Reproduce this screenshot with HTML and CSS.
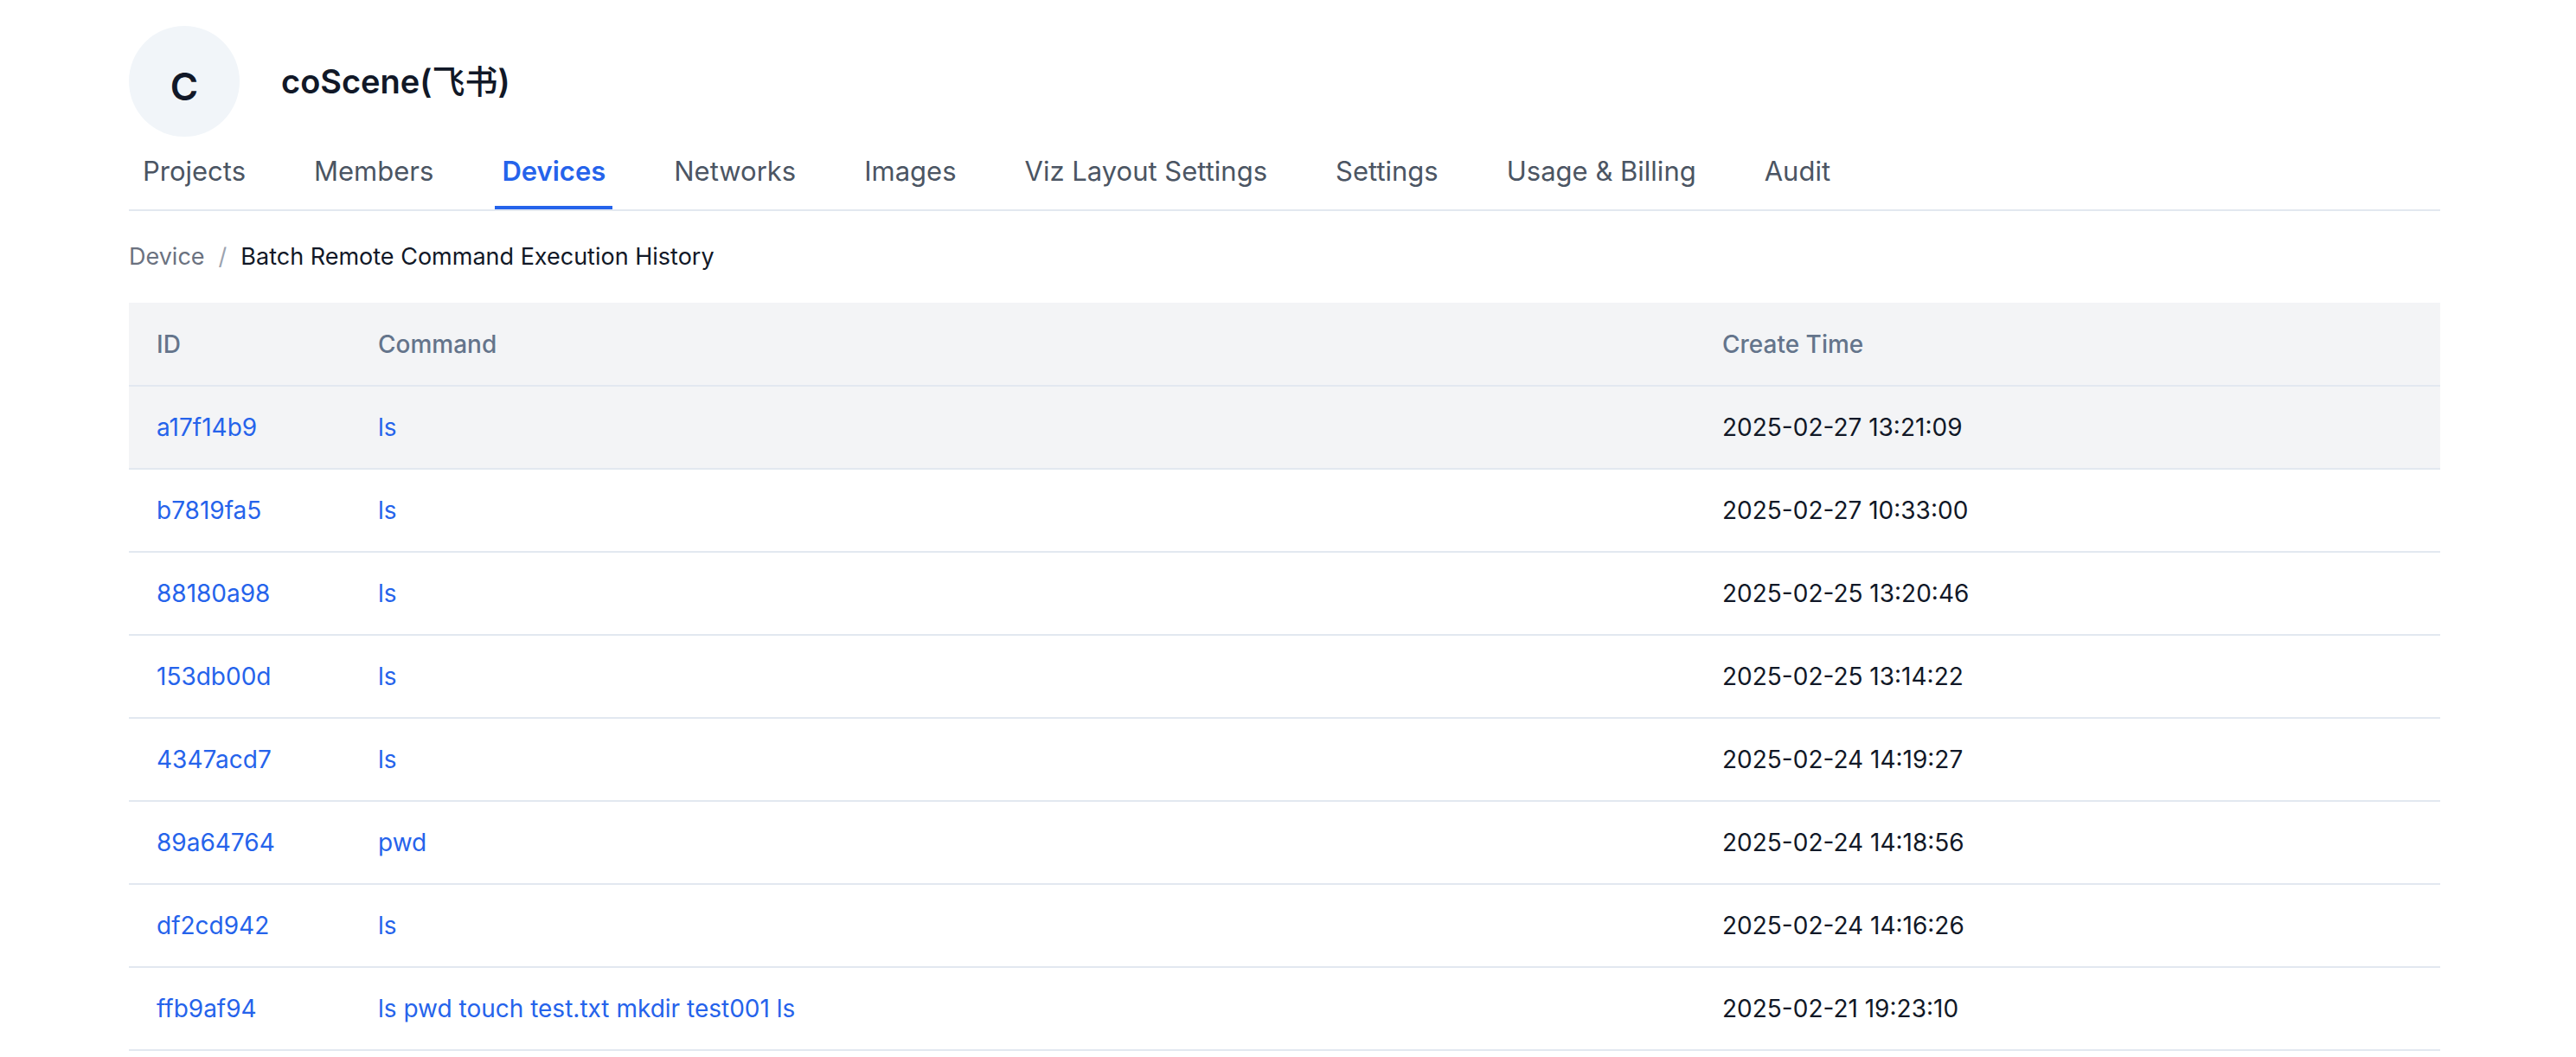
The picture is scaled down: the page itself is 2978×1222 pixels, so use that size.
FILE: index.html
```html
<!DOCTYPE html>
<html lang="en">
<head>
<meta charset="utf-8">
<title>Batch Remote Command Execution History</title>
<link rel="stylesheet" href="styles.css">
</head>
<body>
<div class="page">
<header class="org">
<div class="avatar" aria-hidden="true">C</div>
<h1 class="org-name">coScene(<span class="org-alias" lang="zh">飞书</span>)</h1>
</header>
<nav class="tabs">
<a class="tab" href="#">Projects</a>
<a class="tab" href="#">Members</a>
<a class="tab active" href="#" aria-current="page">Devices</a>
<a class="tab" href="#">Networks</a>
<a class="tab" href="#">Images</a>
<a class="tab" href="#">Viz Layout Settings</a>
<a class="tab" href="#">Settings</a>
<a class="tab" href="#">Usage &amp; Billing</a>
<a class="tab" href="#">Audit</a>
</nav>
<nav class="crumbs">
<a class="crumb" href="#">Device</a>
<span class="slash">/</span>
<span class="current">Batch Remote Command Execution History</span>
</nav>
<table class="history">
<colgroup><col class="col-id"><col class="col-command"><col class="col-time"></colgroup>
<thead><tr><th>ID</th><th>Command</th><th>Create Time</th></tr></thead>
<tbody>
<tr class="hovered"><td><a href="#">a17f14b9</a></td><td><a href="#">ls</a></td><td>2025-02-27 13:21:09</td></tr>
<tr><td><a href="#">b7819fa5</a></td><td><a href="#">ls</a></td><td>2025-02-27 10:33:00</td></tr>
<tr><td><a href="#">88180a98</a></td><td><a href="#">ls</a></td><td>2025-02-25 13:20:46</td></tr>
<tr><td><a href="#">153db00d</a></td><td><a href="#">ls</a></td><td>2025-02-25 13:14:22</td></tr>
<tr><td><a href="#">4347acd7</a></td><td><a href="#">ls</a></td><td>2025-02-24 14:19:27</td></tr>
<tr><td><a href="#">89a64764</a></td><td><a href="#">pwd</a></td><td>2025-02-24 14:18:56</td></tr>
<tr><td><a href="#">df2cd942</a></td><td><a href="#">ls</a></td><td>2025-02-24 14:16:26</td></tr>
<tr><td><a href="#">ffb9af94</a></td><td><a href="#">ls pwd touch test.txt mkdir test001 ls</a></td><td>2025-02-21 19:23:10</td></tr>
</tbody>
</table>
</div>
</body>
</html>
```
FILE: styles.css
```css
* { box-sizing: border-box; }
body {
  margin: 0;
  background: #fff;
  color: #111827;
  font: 28px/44px Inter, "Noto Sans CJK SC", sans-serif;
}
a { color: inherit; text-decoration: none; }
.page { padding: 30px 157px 0 149px; }
.org { display: flex; align-items: center; gap: 48px; }
.avatar {
  width: 128px;
  height: 128px;
  border-radius: 50%;
  background: #f1f5f9;
  font-size: 44px;
  font-weight: 600;
  line-height: 140px;
  text-align: center;
}
.org-name { margin: 0; font-size: 38px; font-weight: 600; line-height: 56px; }
.org-alias { font-weight: 500; }
.tabs {
  display: flex;
  gap: 63px;
  padding: 0 8px;
  border-bottom: 2px solid #e2e8f0;
  color: #4b5563;
  font-size: 31px;
}
.tab { height: 84px; padding: 18px 8px 0; }
.tab.active { color: #2563eb; font-weight: 600; border-bottom: 4px solid #2563eb; }
.crumbs { display: flex; gap: 16px; padding: 31px 0; font-size: 27px; }
.crumb { color: #6b7280; }
.slash { color: #9ca3af; }
.history {
  width: 100%;
  table-layout: fixed;
  border-collapse: separate;
  border-spacing: 0;
}
.col-id { width: 256px; }
.col-time { width: 862px; }
.history th, .history td {
  height: 96px;
  padding: 0 32px;
  border-bottom: 2px solid #e2e8f0;
  text-align: left;
}
.history th { height: 97px; background: #f3f4f6; color: #64748b; font-weight: 500; }
.history td a { color: #2563eb; }
.hovered td { background: #f3f4f6; }
```
